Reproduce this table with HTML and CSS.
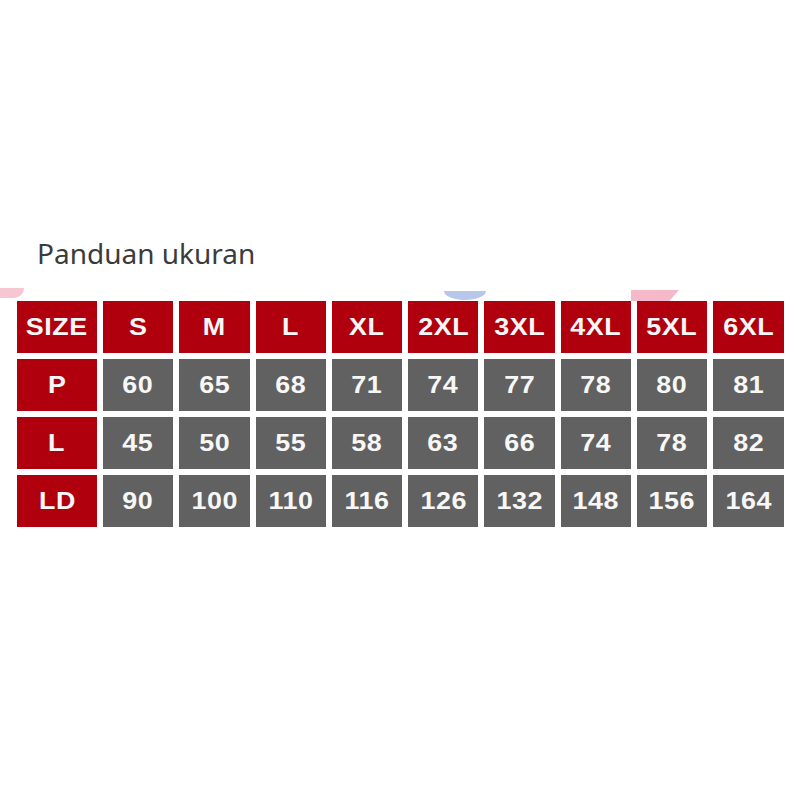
FILE: index.html
```html
<!DOCTYPE html>
<html>
<head>
<meta charset="utf-8">
<link rel="stylesheet" href="styles.css">
</head>
<body>
<div class="page">
  <h1 class="title">Panduan ukuran</h1>
  <div class="chart">
    <div class="deco deco-pink-left"></div>
    <div class="deco deco-blue"></div>
    <div class="deco deco-pink-right"></div>
    <div class="grid">
      <div class="cell red"><span>SIZE</span></div>
      <div class="cell red"><span>S</span></div>
      <div class="cell red"><span>M</span></div>
      <div class="cell red"><span>L</span></div>
      <div class="cell red"><span>XL</span></div>
      <div class="cell red"><span>2XL</span></div>
      <div class="cell red"><span>3XL</span></div>
      <div class="cell red"><span>4XL</span></div>
      <div class="cell red"><span>5XL</span></div>
      <div class="cell red"><span>6XL</span></div>

      <div class="cell red"><span>P</span></div>
      <div class="cell gray"><span>60</span></div>
      <div class="cell gray"><span>65</span></div>
      <div class="cell gray"><span>68</span></div>
      <div class="cell gray"><span>71</span></div>
      <div class="cell gray"><span>74</span></div>
      <div class="cell gray"><span>77</span></div>
      <div class="cell gray"><span>78</span></div>
      <div class="cell gray"><span>80</span></div>
      <div class="cell gray"><span>81</span></div>

      <div class="cell red"><span>L</span></div>
      <div class="cell gray"><span>45</span></div>
      <div class="cell gray"><span>50</span></div>
      <div class="cell gray"><span>55</span></div>
      <div class="cell gray"><span>58</span></div>
      <div class="cell gray"><span>63</span></div>
      <div class="cell gray"><span>66</span></div>
      <div class="cell gray"><span>74</span></div>
      <div class="cell gray"><span>78</span></div>
      <div class="cell gray"><span>82</span></div>

      <div class="cell red"><span>LD</span></div>
      <div class="cell gray"><span>90</span></div>
      <div class="cell gray"><span>100</span></div>
      <div class="cell gray"><span>110</span></div>
      <div class="cell gray"><span>116</span></div>
      <div class="cell gray"><span>126</span></div>
      <div class="cell gray"><span>132</span></div>
      <div class="cell gray"><span>148</span></div>
      <div class="cell gray"><span>156</span></div>
      <div class="cell gray"><span>164</span></div>
    </div>
  </div>
</div>
</body>
</html>
```

FILE: styles.css
```css
html, body {
  margin: 0;
  padding: 0;
  background: #ffffff;
}

.page {
  width: 800px;
  height: 800px;
  padding-top: 237px;
  box-sizing: border-box;
}

.title {
  margin: 0 0 32px 37px;
  font-family: "Noto Sans", "Open Sans", sans-serif;
  font-weight: 400;
  font-size: 28px;
  line-height: 32px;
  color: #3b3b3b;
}

.chart {
  position: relative;
  padding-left: 17px;
}

.grid {
  display: grid;
  grid-template-columns: 80px repeat(9, 70.3px);
  grid-auto-rows: 52px;
  gap: 6px;
  position: relative;
}

.cell {
  display: flex;
  align-items: center;
  justify-content: center;
  font-family: "Liberation Sans", Arial, sans-serif;
  font-weight: 700;
  font-size: 24px;
  color: #f7f7f7;
}

.cell span {
  display: inline-block;
  letter-spacing: 0.5px;
  transform: scaleX(1.12);
}

.red {
  background: #b1000d;
}

.gray {
  background: #616161;
}

.deco {
  position: absolute;
}

.deco-pink-left {
  left: 0;
  top: -13px;
  width: 24px;
  height: 10px;
  background: #f4bccb;
  border-radius: 0 0 12px 0;
  opacity: 0.85;
}

.deco-blue {
  left: 444px;
  top: -10px;
  width: 42px;
  height: 9px;
  background: #b7c7ea;
  border-radius: 0 0 21px 21px / 0 0 9px 9px;
}

.deco-pink-right {
  left: 631px;
  top: -11px;
  width: 48px;
  height: 11px;
  background: #f6b9c9;
  clip-path: polygon(0 0, 100% 0, 80% 100%, 0 100%);
}
```
